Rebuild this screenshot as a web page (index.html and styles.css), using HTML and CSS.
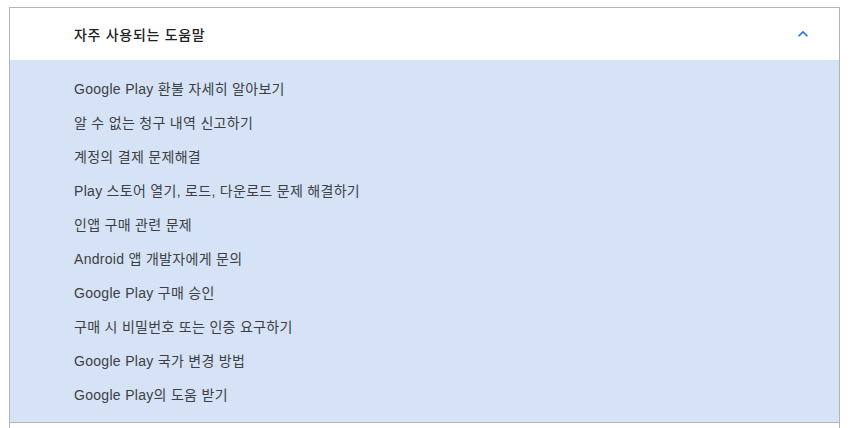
FILE: index.html
```html
<!DOCTYPE html>
<html lang="ko">

<head>
    <meta charset="UTF-8">
    <meta name="viewport" content="width=device-width, initial-scale=1.0">
    <title>자주 사용되는 도움말</title>
    <link rel="stylesheet" href="styles.css">
</head>

<body>
    <div class="accordion">
        <!-- Header -->
        <div class="accordion-header">
            <span class="title">자주 사용되는 도움말</span>
            <svg class="chevron" width="20" height="20" viewBox="0 0 24 24">
                <path d="M7.41 15.41L12 10.83l4.59 4.58L18 14l-6-6-6 6z" fill="#1a73e8"></path>
            </svg>
        </div>

        <!-- Links -->
        <ul class="accordion-panel">
            <li><a href="#">Google Play 환불 자세히 알아보기</a></li>
            <li><a href="#">알 수 없는 청구 내역 신고하기</a></li>
            <li><a href="#">계정의 결제 문제해결</a></li>
            <li><a href="#">Play 스토어 열기, 로드, 다운로드 문제 해결하기</a></li>
            <li><a href="#">인앱 구매 관련 문제</a></li>
            <li><a href="#">Android 앱 개발자에게 문의</a></li>
            <li><a href="#">Google Play 구매 승인</a></li>
            <li><a href="#">구매 시 비밀번호 또는 인증 요구하기</a></li>
            <li><a href="#">Google Play 국가 변경 방법</a></li>
            <li><a href="#">Google Play의 도움 받기</a></li>
        </ul>
        <div class="accordion-next"></div>
    </div>
</body>

</html>
```
FILE: styles.css
```css
body {
    margin: 0;
    background-color: #fff;
    font-family: "Liberation Sans", "Noto Sans CJK KR", Arial, sans-serif;
    color: #202124;
}

.accordion {
    margin: 7px 0 0 9px;
    width: 829px;
    border-top: 1px solid #b4b4b4;
    border-left: 1px solid #b4b4b4;
    border-right: 1px solid #b4b4b4;
}

.accordion-header {
    display: flex;
    align-items: center;
    justify-content: space-between;
    height: 52px;
    padding: 0 26px 0 64px;
    background-color: #fff;
}

.title {
    font-size: 14px;
    font-weight: 500;
    letter-spacing: 0.7px;
    color: #202124;
}

.chevron {
    display: block;
}

.accordion-panel {
    list-style: none;
    margin: 0;
    padding: 12px 0 10px 64px;
    background-color: #d6e3f6;
    border-bottom: 1px solid #b4b4b4;
}

.accordion-panel li {
    height: 34px;
    line-height: 34px;
    font-size: 14px;
    letter-spacing: 0.3px;
}

.accordion-panel a {
    color: #3c4043;
    text-decoration: none;
}

.accordion-next {
    height: 20px;
}
```
